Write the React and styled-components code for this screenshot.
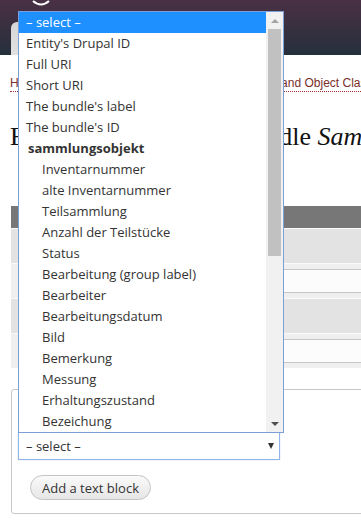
import React from "react";
import styled, { createGlobalStyle } from "styled-components";

const GlobalStyle = createGlobalStyle`
  html, body {
    margin: 0;
    padding: 0;
    overflow: hidden;
    background: #fff;
  }
  * { box-sizing: border-box; }
`;

const options = [
  { label: "– select –", selected: true },
  { label: "Entity's Drupal ID" },
  { label: "Full URI" },
  { label: "Short URI" },
  { label: "The bundle's label" },
  { label: "The bundle's ID" },
  { label: "sammlungsobjekt", group: true },
  { label: "Inventarnummer", child: true },
  { label: "alte Inventarnummer", child: true },
  { label: "Teilsammlung", child: true },
  { label: "Anzahl der Teilstücke", child: true },
  { label: "Status", child: true },
  { label: "Bearbeitung (group label)", child: true },
  { label: "Bearbeiter", child: true },
  { label: "Bearbeitungsdatum", child: true },
  { label: "Bild", child: true },
  { label: "Bemerkung", child: true },
  { label: "Messung", child: true },
  { label: "Erhaltungszustand", child: true },
  { label: "Bezeichung", child: true },
];

const rows = [
  { shade: "dark" },
  { shade: "light", input: true },
  { shade: "dark" },
  { shade: "light", input: true },
];

const App = () => {
  return (
    <>
      <GlobalStyle />
      <Page>
        <Header>
          <LogoRow>
            <svg width="18" height="6" viewBox="0 0 18 6">
              <path d="M1 1 Q9 8 17 1" stroke="#fff" strokeWidth="2" fill="none" />
            </svg>
          </LogoRow>
          <Tabs>
            <Tab>Edit</Tab>
          </Tabs>
        </Header>

        <Content>
          <Breadcrumb>
            <Crumb>Home</Crumb>
            <Sep>›</Sep>
            <Crumb>Administration</Crumb>
            <Sep>›</Sep>
            <Crumb>Structure</Crumb>
            <Sep>›</Sep>
            <Crumb>WissKI Bundles and Object Classes</Crumb>
          </Breadcrumb>

          <Title>
            Edit title pattern for a bundle <em>Sammlungsobjekt</em>
          </Title>

          <Table>
            <HeadRow />
            {rows.map((r, i) => (
              <Row key={i} shade={r.shade}>
                {r.input && <FieldBox />}
              </Row>
            ))}
          </Table>

          <Fieldset>
            <SelectBox>
              <span>– select –</span>
              <Caret />
            </SelectBox>
            <Button>Add a text block</Button>
          </Fieldset>
        </Content>

        <Dropdown>
          <OptionList>
            {options.map((o) => (
              <Option
                key={o.label}
                selected={o.selected}
                group={o.group}
                child={o.child}
              >
                {o.label}
              </Option>
            ))}
          </OptionList>
          <Scrollbar>
            <ArrowUp />
            <Track>
              <Thumb />
            </Track>
            <ArrowDown />
          </Scrollbar>
        </Dropdown>
      </Page>
    </>
  );
};

export default App;

const Page = styled.div`
  position: relative;
  width: 900px;
  min-height: 524px;
  font-family: "Open Sans", "Noto Sans", sans-serif;
`;

const Header = styled.div`
  height: 55px;
  background: linear-gradient(to bottom, #4a3045 0%, #36303f 55%, #25303d 100%);
  display: flex;
  flex-direction: column;
`;

const LogoRow = styled.div`
  height: 22px;
  padding-left: 32px;
  svg {
    display: block;
  }
`;

const Tabs = styled.div`
  flex: 1;
  display: flex;
  align-items: flex-end;
  padding-left: 11px;
`;

const Tab = styled.div`
  width: 160px;
  height: 33px;
  border-radius: 6px 6px 0 0;
  background: linear-gradient(to bottom, #d6d6d6, #e2e2e2);
  color: transparent;
  font-size: 13px;
`;

const Content = styled.div`
  padding: 0 0 0 10px;
`;

const Breadcrumb = styled.div`
  margin-top: 20px;
  height: 16px;
  font-family: "Liberation Sans", Arial, sans-serif;
  font-size: 12px;
  line-height: 16px;
  color: #7a2e2a;
  white-space: nowrap;
`;

const Crumb = styled.span`
  border-bottom: 1px dotted #a0302a;
  padding-bottom: 1px;
`;

const Sep = styled.span`
  padding: 0 3px 0 2px;
  color: #555;
`;

const Title = styled.h1`
  margin: 30px 0 0;
  height: 31px;
  font-family: "Liberation Serif", "Times New Roman", serif;
  font-weight: normal;
  font-size: 26px;
  line-height: 31px;
  color: #111;
  white-space: nowrap;
`;

const Table = styled.div`
  margin-top: 54px;
  margin-left: 1px;
  display: flex;
  flex-direction: column;
`;

const HeadRow = styled.div`
  height: 22px;
  background: #777;
`;

const Row = styled.div`
  height: 35px;
  border-top: 1px solid #fafafa;
  background: ${({ shade }) => (shade === "dark" ? "#e3e3e3" : "#efefef")};
  display: flex;
  align-items: center;
  padding-left: 220px;
`;

const FieldBox = styled.div`
  width: 600px;
  height: 24px;
  background: #fcfcfc;
  border-top: 1px solid #c6c6c6;
  border-bottom: 1px solid #c6c6c6;
`;

const Fieldset = styled.div`
  margin-top: 21px;
  margin-left: 1px;
  height: 125px;
  border: 1px solid #c8c8c8;
  border-radius: 3px;
  padding: 41px 0 0 6px;
  display: flex;
  flex-direction: column;
  align-items: flex-start;
`;

const SelectBox = styled.div`
  width: 262px;
  height: 29px;
  border: 1px solid #8fb3ea;
  box-shadow: 0 0 1px #a9c6f0;
  background: #fff;
  display: flex;
  align-items: center;
  justify-content: space-between;
  padding: 0 5px 0 7px;
  font-size: 13px;
  color: #333;
`;

const Caret = styled.span`
  width: 0;
  height: 0;
  border-left: 3px solid transparent;
  border-right: 3px solid transparent;
  border-top: 6px solid #333;
`;

const Button = styled.button`
  margin: 15px 0 0 12px;
  height: 25px;
  padding: 0 11px;
  border: 1px solid #c4c4c4;
  border-radius: 13px;
  background: linear-gradient(to bottom, #fafafa, #e6e6e6);
  font-family: "Open Sans", "Noto Sans", sans-serif;
  font-size: 13px;
  color: #333;
`;

const Dropdown = styled.div`
  position: absolute;
  left: 18px;
  top: 11px;
  width: 266px;
  height: 422px;
  border: 1px solid #7c9fd8;
  background: #fff;
  display: flex;
`;

const OptionList = styled.div`
  flex: 1;
  display: flex;
  flex-direction: column;
`;

const Option = styled.div`
  height: 21px;
  line-height: 21px;
  font-size: 13px;
  white-space: nowrap;
  color: ${({ selected }) => (selected ? "#fff" : "#333")};
  background: ${({ selected }) => (selected ? "#1e90ff" : "transparent")};
  font-weight: ${({ group }) => (group ? 700 : 400)};
  padding-left: ${({ group, child }) => (child ? 23 : group ? 9 : 7)}px;
`;

const Scrollbar = styled.div`
  width: 17px;
  background: #f1f1f1;
  display: flex;
  flex-direction: column;
  align-items: center;
`;

const ArrowUp = styled.div`
  height: 17px;
  width: 17px;
  display: flex;
  align-items: center;
  justify-content: center;
  &::before {
    content: "";
    border-left: 4px solid transparent;
    border-right: 4px solid transparent;
    border-bottom: 4px solid #a3a3a3;
  }
`;

const ArrowDown = styled(ArrowUp)`
  &::before {
    border-bottom: 0;
    border-top: 4px solid #505050;
  }
`;

const Track = styled.div`
  flex: 1;
  width: 100%;
  padding: 0 2px;
`;

const Thumb = styled.div`
  height: 227px;
  background: #c1c1c1;
`;
